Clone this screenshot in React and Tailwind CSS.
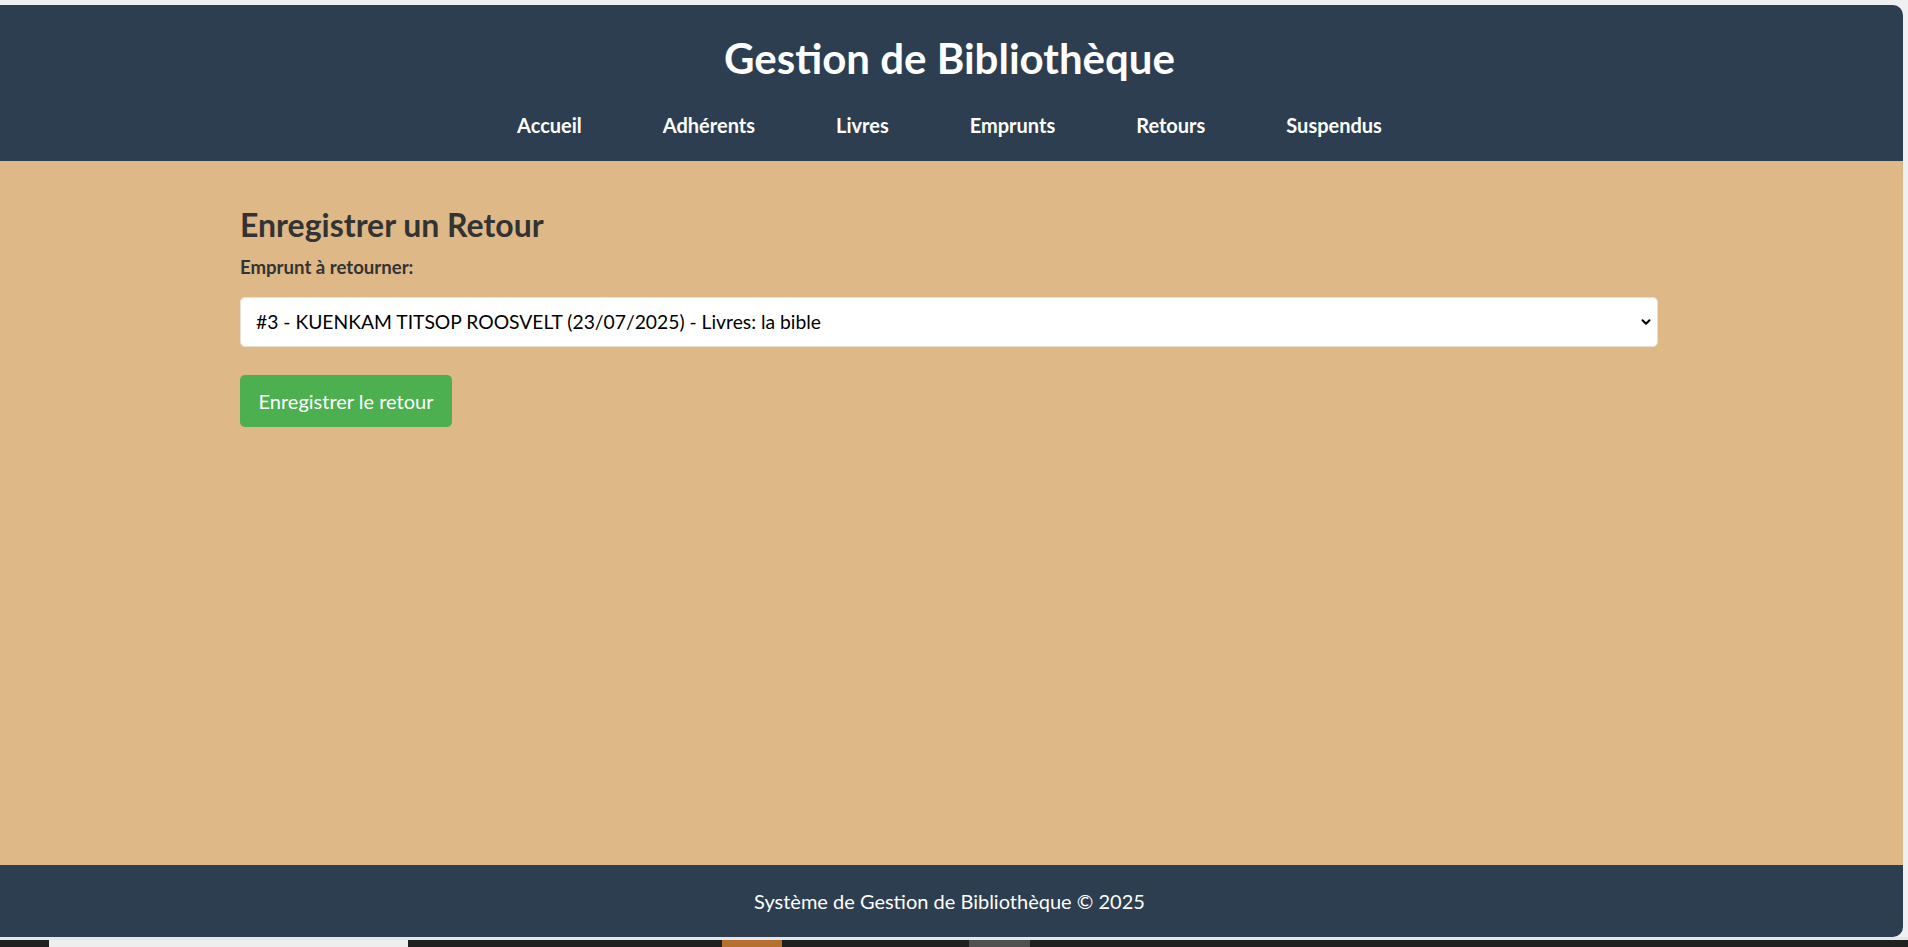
import React, { useState } from "react";
import { ChevronDown } from "lucide-react";

const liens = ["Accueil", "Adhérents", "Livres", "Emprunts", "Retours", "Suspendus"];

const emprunts = [
  { id: 3, nom: "KUENKAM TITSOP ROOSVELT", date: "23/07/2025", livres: "la bible" },
];

const App = () => {
  const [choix, setChoix] = useState(emprunts[0].id);

  return (
    <div className="h-[947px] w-full bg-[#eef0f2] flex flex-col font-['Lato','Liberation_Sans',sans-serif] overflow-hidden">
      <div className="h-[5px] shrink-0" />
      <div className="flex-1 flex min-h-0">
        <div className="w-[1903px] flex flex-col rounded-tr-[10px] rounded-br-[10px] overflow-hidden">
          <header className="h-[156px] shrink-0 bg-[#2c3e50] text-white flex flex-col items-center pr-[4px]">
            <h1 className="mt-[29px] text-[42px] leading-[48px] font-bold">Gestion de Bibliothèque</h1>
            <nav className="mt-[31px] flex gap-[81px]">
              {liens.map((lien) => (
                <a key={lien} href="#" className="text-[20px] leading-[24px] font-bold text-white">
                  {lien}
                </a>
              ))}
            </nav>
          </header>

          <main className="flex-1 bg-[#deb887] pt-[46px]">
            <div className="w-[1418px] ml-[240px]">
              <h2 className="text-[32px] leading-[36px] font-bold text-[#333]">Enregistrer un Retour</h2>
              <label className="block mt-[12px] text-[18.6px] leading-[24px] font-bold text-[#333]">
                Emprunt à retourner:
              </label>
              <div className="relative mt-[18px]">
                <select
                  value={choix}
                  onChange={(e) => setChoix(e.target.value)}
                  className="w-full h-[50px] appearance-none bg-white rounded-[5px] border border-[#e6e0d6] pl-[15px] text-[19.3px] text-black font-['Lato','Liberation_Sans',sans-serif]"
                >
                  {emprunts.map((e) => (
                    <option key={e.id} value={e.id}>
                      #{e.id} - {e.nom} ({e.date}) - Livres: {e.livres}
                    </option>
                  ))}
                </select>
                <ChevronDown
                  size={14}
                  strokeWidth={3.5}
                  className="absolute right-[5px] top-[18px] text-black pointer-events-none"
                />
              </div>
              <button className="mt-[28px] h-[52px] w-[212px] bg-[#4caf50] text-white text-[20px] rounded-[5px]">
                Enregistrer le retour
              </button>
            </div>
          </main>

          <footer className="h-[72px] shrink-0 bg-[#2c3e50] text-white flex items-center justify-center text-[20px] pr-[4px]">
            Système de Gestion de Bibliothèque © 2025
          </footer>
        </div>
      </div>
      <div className="h-[10px] shrink-0 flex flex-col">
        <div className="h-[3px] bg-[#e4e8ec]" />
        <div className="flex-1 bg-[#202020] flex">
          <div className="w-[49px]" />
          <div className="w-[359px] bg-[#eeeeee]" />
          <div className="w-[314px]" />
          <div className="w-[60px] bg-[#b5702f]" />
          <div className="w-[187px]" />
          <div className="w-[61px] bg-[#505050]" />
        </div>
      </div>
    </div>
  );
};

export default App;
